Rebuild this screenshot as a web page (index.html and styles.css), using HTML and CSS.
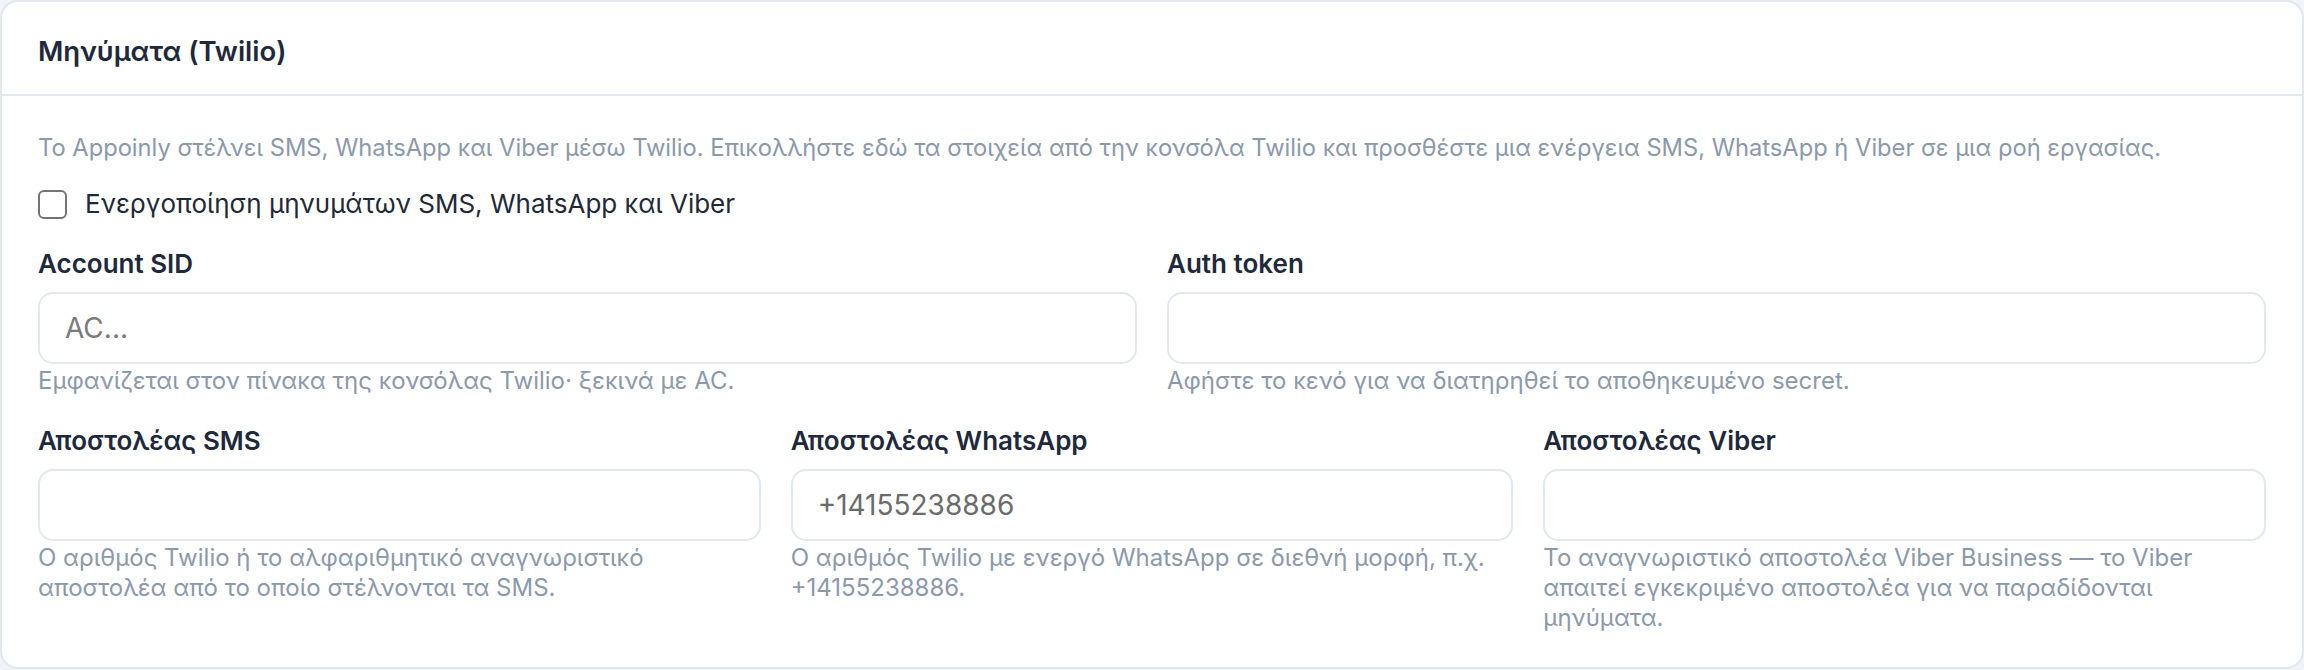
FILE: index.html
```html
<!DOCTYPE html>
<html lang="el">
<head>
<meta charset="utf-8">
<title>Μηνύματα (Twilio)</title>
<link rel="stylesheet" href="styles.css">
</head>
<body>
<section class="card">
  <header class="card-header">
    <h2 class="card-title">Μηνύματα (Twilio)</h2>
  </header>
  <div class="card-body">
    <p class="intro">Το Appoinly στέλνει SMS, WhatsApp και Viber μέσω Twilio. Επικολλήστε εδώ τα στοιχεία από την κονσόλα Twilio και προσθέστε μια ενέργεια SMS, WhatsApp ή Viber σε μια ροή εργασίας.</p>
    <label class="check-row">
      <input type="checkbox" class="check">
      <span class="check-label">Ενεργοποίηση μηνυμάτων SMS, WhatsApp και Viber</span>
    </label>
    <div class="grid grid-2">
      <div class="field">
        <label class="field-label" for="sid">Account SID</label>
        <input id="sid" class="input" type="text" placeholder="AC...">
        <p class="help">Εμφανίζεται στον πίνακα της κονσόλας Twilio· ξεκινά με AC.</p>
      </div>
      <div class="field">
        <label class="field-label" for="token">Auth token</label>
        <input id="token" class="input" type="password">
        <p class="help">Αφήστε το κενό για να διατηρηθεί το αποθηκευμένο secret.</p>
      </div>
    </div>
    <div class="grid grid-3">
      <div class="field">
        <label class="field-label" for="sms">Αποστολέας SMS</label>
        <input id="sms" class="input" type="text">
        <p class="help">Ο αριθμός Twilio ή το αλφαριθμητικό αναγνωριστικό αποστολέα από το οποίο στέλνονται τα SMS.</p>
      </div>
      <div class="field">
        <label class="field-label" for="wa">Αποστολέας WhatsApp</label>
        <input id="wa" class="input" type="text" value="+14155238886">
        <p class="help">Ο αριθμός Twilio με ενεργό WhatsApp σε διεθνή μορφή, π.χ. +14155238886.</p>
      </div>
      <div class="field">
        <label class="field-label" for="viber">Αποστολέας Viber</label>
        <input id="viber" class="input" type="text">
        <p class="help">Το αναγνωριστικό αποστολέα Viber Business — το Viber απαιτεί εγκεκριμένο αποστολέα για να παραδίδονται μηνύματα.</p>
      </div>
    </div>
  </div>
</section>
</body>
</html>
```
FILE: styles.css
```css
* { box-sizing: border-box; }
html, body { margin: 0; padding: 0; }
body {
  background: #f1f4f8;
  font-family: Inter, "Liberation Sans", sans-serif;
  color: #1e293b;
}
.card {
  background: #ffffff;
  border: 2px solid #e3e8ef;
  border-radius: 18px;
  overflow: hidden;
}
.card-header {
  padding: 28px 36px 22px;
  border-bottom: 2px solid #e3e8ef;
}
.card-title {
  margin: 0;
  font-weight: 600;
  font-size: 27.5px;
  line-height: 42px;
  color: #1e293b;
}
.card-body {
  padding: 37px 36px 34px;
  display: flex;
  flex-direction: column;
}
.intro {
  margin: 0;
  font-size: 23.7px;
  line-height: 30px;
  color: #8b99ab;
  white-space: nowrap;
}
.check-row {
  margin-top: 26px;
  display: flex;
  align-items: center;
  gap: 18px;
  height: 30px;
}
.check {
  appearance: none;
  -webkit-appearance: none;
  margin: 0;
  width: 29px;
  height: 29px;
  border: 2px solid #747474;
  border-radius: 6px;
  background: #fff;
  flex: none;
}
.check-label {
  font-size: 26px;
  line-height: 30px;
  color: #1f2937;
}
.grid {
  display: grid;
  column-gap: 30px;
  margin-top: 27px;
}
.grid-2 { grid-template-columns: 1fr 1fr; }
.grid-3 { grid-template-columns: 1fr 1fr 1fr; }
.field {
  display: flex;
  flex-direction: column;
  min-width: 0;
}
.field-label {
  font-weight: 600;
  font-size: 26px;
  line-height: 36px;
  color: #1e293b;
}
.input {
  margin-top: 10px;
  height: 72px;
  width: 100%;
  border: 2px solid #e3e8ef;
  border-radius: 15px;
  padding: 0 25px;
  font-family: Inter, "Liberation Sans", sans-serif;
  font-size: 28px;
  color: #6b6b6b;
  background: #fff;
  outline: none;
}
.input::placeholder { color: #7b7b7b; }
.help {
  margin: 2px 0 0;
  font-size: 24px;
  line-height: 30px;
  color: #8b99ab;
}
```
